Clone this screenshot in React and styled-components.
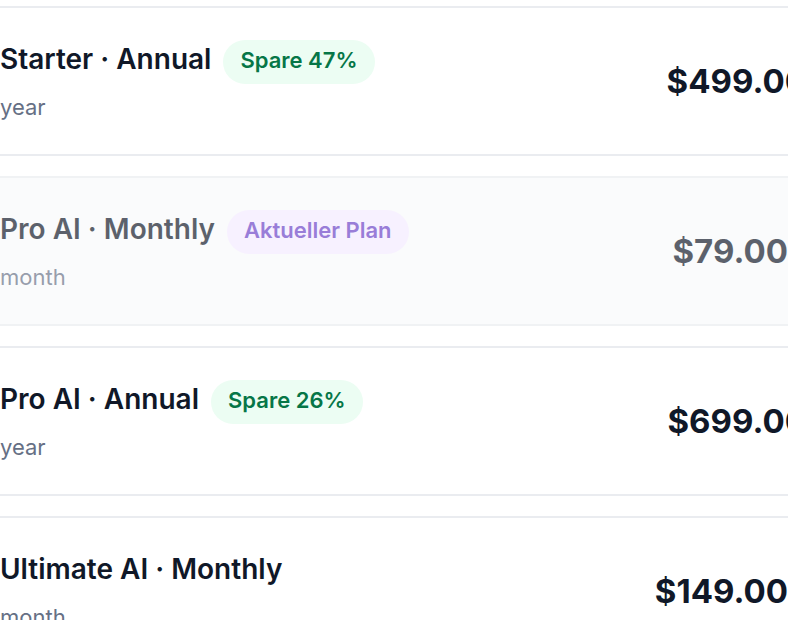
import styled, { createGlobalStyle } from "styled-components";

const GlobalStyle = createGlobalStyle`
  body {
    margin: 0;
    background: #ffffff;
    overflow: hidden;
    font-family: Inter, "Noto Sans", sans-serif;
  }
`

const PlanList = styled.div`
  width: 875px;
  margin-left: -34px;
  padding-top: 6px;
  display: flex;
  flex-direction: column;
  gap: 20px;
`

const PlanCard = styled.div`
  display: flex;
  justify-content: space-between;
  align-items: center;
  padding: 32px;
  border: 2px solid #eaecf0;
  border-radius: 16px;
  background-color: ${(p) => (p.$current ? "#f9fafb" : "#ffffff")};
  opacity: ${(p) => (p.$current ? 0.68 : 1)};
`

const Info = styled.div`
  display: flex;
  flex-direction: column;
  gap: 8px;
`

const Head = styled.div`
  display: flex;
  align-items: flex-start;
  gap: 12px;
  height: 44px;
`

const Title = styled.span`
  font-size: 28px;
  font-weight: 600;
  color: #101828;
  line-height: 38px;
`

const Badge = styled.span`
  display: inline-block;
  padding: 6px 17px 10px;
  border-radius: 999px;
  font-size: 22px;
  font-weight: 600;
  line-height: 28px;
  background-color: ${(p) => (p.$tone === "purple" ? "#f4ebff" : "#ecfdf3")};
  color: ${(p) => (p.$tone === "purple" ? "#6941c6" : "#067647")};
`

const Period = styled.span`
  font-size: 22px;
  line-height: 30px;
  color: #667085;
`

const Price = styled.span`
  font-size: 33px;
  font-weight: 700;
  color: #101828;
  margin-right: ${(p) => p.$trail || 0}px;
`

const plans = [
  { name: "Starter · Annual", period: "year", price: "$499.00", badge: "Spare 47%" },
  { name: "Pro AI · Monthly", period: "month", price: "$79.00", badge: "Aktueller Plan", current: true, trail: 19 },
  { name: "Pro AI · Annual", period: "year", price: "$699.00", badge: "Spare 26%" },
  { name: "Ultimate AI · Monthly", period: "month", price: "$149.00", trail: 19 },
]

function App() {
  return (
    <>
      <GlobalStyle />
      <PlanList>
        {plans.map((plan) => (
          <PlanCard key={plan.name} $current={plan.current}>
            <Info>
              <Head>
                <Title>{plan.name}</Title>
                {plan.badge && (
                  <Badge $tone={plan.current ? "purple" : "green"}>{plan.badge}</Badge>
                )}
              </Head>
              <Period>{plan.period}</Period>
            </Info>
            <Price $trail={plan.trail}>{plan.price}</Price>
          </PlanCard>
        ))}
      </PlanList>
    </>
  )
}

export default App;
